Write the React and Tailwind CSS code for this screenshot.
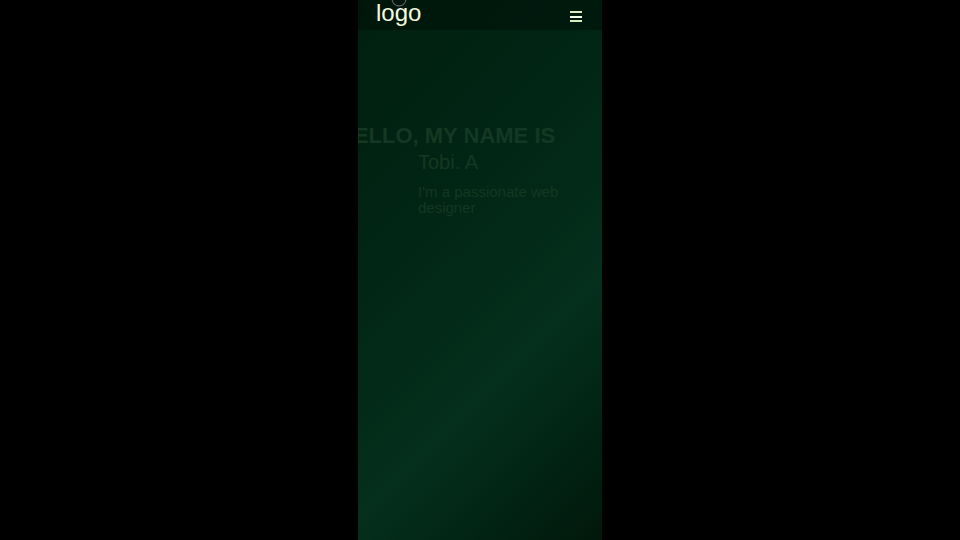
export default function App() {
  return (
    <div className="flex min-h-screen justify-center overflow-hidden bg-black font-['Liberation_Sans',Arial,sans-serif]">
      <div className="relative w-1/4 min-w-[244px] overflow-hidden bg-[linear-gradient(135deg,#01200f_0%,#012414_30%,#032b19_55%,#05301d_66%,#022616_80%,#01180b_100%)]">
        <header className="flex h-[30px] items-center justify-between bg-black/30 pr-5 pl-[18px]">
          <a href="#home" className="pb-1 text-2xl leading-6 text-[#f4fbe0]">logo</a>
          <button type="button" aria-label="Open menu" className="mt-[3px] text-[#d8ecc4]">
            <svg width="12" height="12" viewBox="0 0 12 12" fill="currentColor" aria-hidden="true">
              <rect y="0" width="12" height="2" />
              <rect y="5" width="12" height="2" fill="#f4fbe8" />
              <rect y="9" width="12" height="2" />
            </svg>
          </button>
        </header>
        <svg className="absolute top-0 left-[33px]" width="16" height="8" viewBox="0 0 16 8" fill="none" aria-hidden="true">
          <circle cx="8" cy="-1" r="7" stroke="#777184" />
        </svg>
        <main className="pt-[94px] text-[#143823]">
          <h1 className="-ml-5 text-[22px] leading-6 font-bold whitespace-nowrap">HELLO, MY NAME IS</h1>
          <div className="pl-[60px]">
            <p className="text-xl leading-7">Tobi. A</p>
            <p className="pt-2 text-[15px] leading-4 whitespace-nowrap">I&#39;m a passionate web<br />designer</p>
          </div>
        </main>
      </div>
    </div>
  );
}
